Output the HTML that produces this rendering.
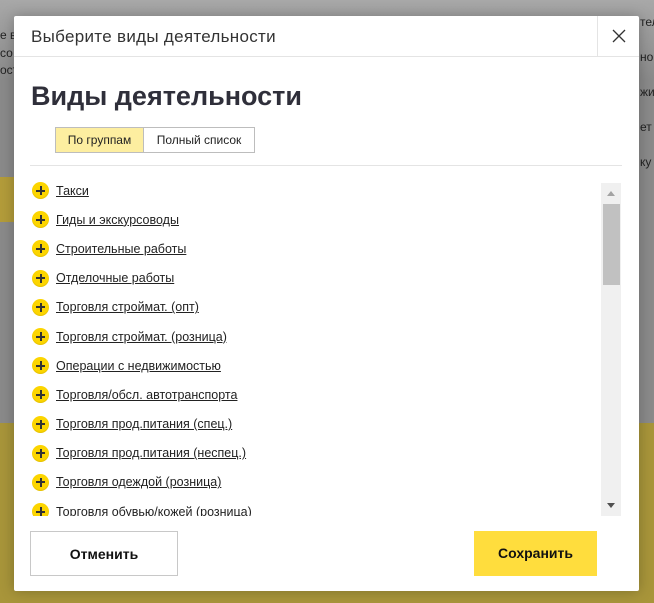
<!DOCTYPE html>
<html><head><meta charset="utf-8"><style>
*{margin:0;padding:0;box-sizing:border-box}
body{width:654px;height:603px;overflow:hidden;position:relative;font-family:"Liberation Sans",sans-serif;background:#8c8c8c}
.bgtop{position:absolute;left:0;top:0;width:654px;height:423px;background:linear-gradient(#a8a8a8,#8a8a8a 80px,#8a8a8a)}
.bgy{position:absolute;left:0;top:423px;width:654px;height:180px;background:#a8953a}
.bgt{position:absolute;font-size:12px;color:#222}
.modal{position:absolute;left:14px;top:16px;width:625px;height:575px;background:#fff;border-radius:2px;box-shadow:0 0 14px rgba(0,0,0,.25)}
.hdr{height:41px;border-bottom:1px solid #e4e4e4;position:relative}
.hdr .t{position:absolute;left:17px;top:11px;font-size:17px;color:#333;letter-spacing:.3px}
.hdr .x{position:absolute;left:583px;top:0;width:42px;height:40px;border-left:1px solid #e4e4e4}
h1{position:absolute;left:17px;top:65px;font-size:27px;font-weight:bold;color:#2f2f3a}
.tabs{position:absolute;left:41px;top:111px;display:flex;font-size:12px;color:#222}
.tabs div{height:26px;line-height:24px;border:1px solid #bdbdbd;text-align:center}
.tabs .a{background:#fdeea0;width:89px}
.tabs .b{border-left:none;width:111px}
.div{position:absolute;left:16px;top:149px;width:592px;height:1px;background:#e4e4e4}
.list{position:absolute;left:16px;top:160px;width:570px;height:340px;overflow:hidden}
.it{height:29.2px;display:flex;align-items:center;font-size:12.5px;color:#222}
.it span{text-decoration:underline;margin-left:7px}
.pl{width:17px;height:17px;border-radius:50%;background:#fcd500;position:relative;margin-left:2px;flex:none;box-shadow:inset 0 -1px 1px rgba(0,0,0,.1)}
.pl:before{content:"";position:absolute;left:4px;top:7.5px;width:9px;height:2px;background:#333}
.pl:after{content:"";position:absolute;left:7.5px;top:4px;width:2px;height:9px;background:#333}
.sb{position:absolute;left:587px;top:167px;width:20px;height:333px;background:#f0f0f0}
.th{position:absolute;left:2px;top:21px;width:17px;height:81px;background:#c1c1c1}
.btn{position:absolute;top:515px;height:45px;font-size:14px;font-weight:bold;color:#111;text-align:center;line-height:45px}
.c{left:16px;width:148px;border:1px solid #c8c8c8}
.s{left:460px;width:123px;background:#ffdd3d}
</style></head><body>
<div class="bgtop"></div><div class="bgy"></div>
<div style="position:absolute;left:0;top:177px;width:14px;height:45px;background:#b39c3a"></div>
<div class="bgt" style="left:0;top:28px">е в</div>
<div class="bgt" style="left:0;top:46px">со</div>
<div class="bgt" style="left:0;top:63px">ост</div>
<div class="bgt" style="left:640px;top:15px">тел</div>
<div class="bgt" style="left:640px;top:50px">но</div>
<div class="bgt" style="left:640px;top:85px">жи</div>
<div class="bgt" style="left:640px;top:120px">ет</div>
<div class="bgt" style="left:640px;top:155px">ку</div>
<div class="modal">
<div class="hdr"><div class="t">Выберите виды деятельности</div>
<div class="x"><svg width="42" height="40"><path d="M15 14L27 26M27 14L15 26" stroke="#333" stroke-width="1.3"/></svg></div></div>
<h1>Виды деятельности</h1>
<div class="tabs"><div class="a">По группам</div><div class="b">Полный список</div></div>
<div class="div"></div>
<div class="list">
<div class="it"><i class="pl"></i><span>Такси</span></div>
<div class="it"><i class="pl"></i><span>Гиды и экскурсоводы</span></div>
<div class="it"><i class="pl"></i><span>Строительные работы</span></div>
<div class="it"><i class="pl"></i><span>Отделочные работы</span></div>
<div class="it"><i class="pl"></i><span>Торговля строймат. (опт)</span></div>
<div class="it"><i class="pl"></i><span>Торговля строймат. (розница)</span></div>
<div class="it"><i class="pl"></i><span>Операции с недвижимостью</span></div>
<div class="it"><i class="pl"></i><span>Торговля/обсл. автотранспорта</span></div>
<div class="it"><i class="pl"></i><span>Торговля прод.питания (спец.)</span></div>
<div class="it"><i class="pl"></i><span>Торговля прод.питания (неспец.)</span></div>
<div class="it"><i class="pl"></i><span>Торговля одеждой (розница)</span></div>
<div class="it"><i class="pl"></i><span>Торговля обувью/кожей (розница)</span></div>
</div>
<div class="sb"><svg width="20" height="333" style="position:absolute;left:0;top:0"><path d="M6 13L10 8L14 13Z" fill="#a3a3a3"/><path d="M6 320L10 325L14 320Z" fill="#505050"/></svg><div class="th"></div></div>
<div class="btn c">Отменить</div>
<div class="btn s">Сохранить</div>
</div>
</body></html>
